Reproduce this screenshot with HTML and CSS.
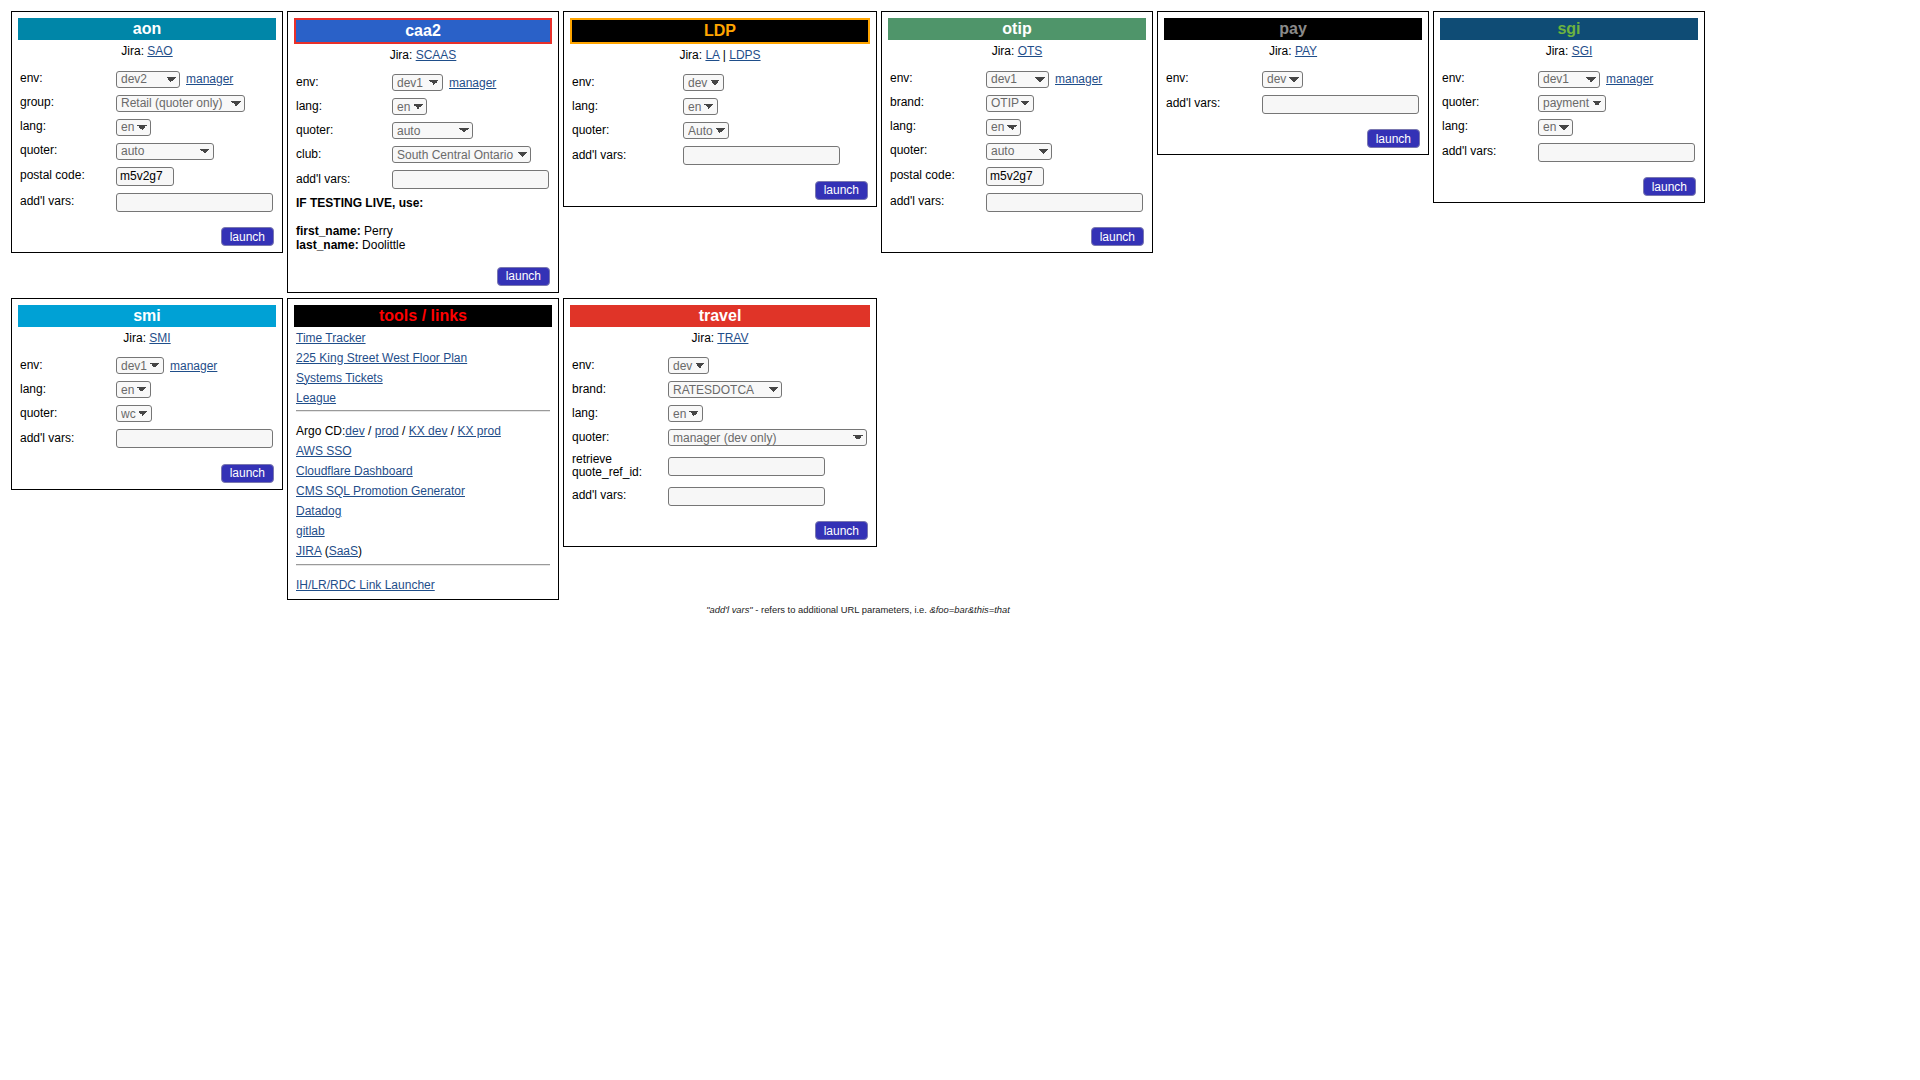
FILE: index.html
```html
<!DOCTYPE html>
<html>
<head>
<meta charset="utf-8">
<title>Launcher</title>
<link rel="stylesheet" href="styles.css">
</head>
<body>
<div class="page">
  <div class="grid">

    <!-- aon -->
    <div class="box">
      <div class="hdr aon">aon</div>
      <div class="jira">Jira: <a href="#">SAO</a></div>
      <div class="form">
        <div class="lbl">env:</div>
        <div class="val"><select class="w64"><option>dev2</option></select><a href="#">manager</a></div>
        <div class="lbl">group:</div>
        <div class="val"><select class="w129"><option>Retail (quoter only)</option></select></div>
        <div class="lbl">lang:</div>
        <div class="val"><select class="w35"><option>en</option></select></div>
        <div class="lbl">quoter:</div>
        <div class="val"><select class="w98"><option>auto</option></select></div>
        <div class="lbl">postal code:</div>
        <div class="val in"><input class="i58" type="text" value="m5v2g7"></div>
        <div class="lbl">add'l vars:</div>
        <div class="val in"><input class="i157" type="text"></div>
      </div>
      <div class="actions"><button class="launch">launch</button></div>
    </div>

    <!-- caa2 -->
    <div class="box">
      <div class="hdr caa2">caa2</div>
      <div class="jira">Jira: <a href="#">SCAAS</a></div>
      <div class="form">
        <div class="lbl">env:</div>
        <div class="val"><select class="w51"><option>dev1</option></select><a href="#">manager</a></div>
        <div class="lbl">lang:</div>
        <div class="val"><select class="w35"><option>en</option></select></div>
        <div class="lbl">quoter:</div>
        <div class="val"><select class="w81"><option>auto</option></select></div>
        <div class="lbl">club:</div>
        <div class="val"><select class="w139"><option>South Central Ontario</option></select></div>
        <div class="lbl">add'l vars:</div>
        <div class="val in"><input class="i157" type="text"></div>
      </div>
      <div class="note">
        <b>IF TESTING LIVE, use:</b><br><br>
        <b>first_name:</b> Perry<br>
        <b>last_name:</b> Doolittle
      </div>
      <div class="actions"><button class="launch">launch</button></div>
    </div>

    <!-- LDP -->
    <div class="box">
      <div class="hdr ldp">LDP</div>
      <div class="jira">Jira: <a href="#">LA</a> | <a href="#">LDPS</a></div>
      <div class="form wide">
        <div class="lbl">env:</div>
        <div class="val"><select class="w41"><option>dev</option></select></div>
        <div class="lbl">lang:</div>
        <div class="val"><select class="w35"><option>en</option></select></div>
        <div class="lbl">quoter:</div>
        <div class="val"><select class="w46"><option>Auto</option></select></div>
        <div class="lbl">add'l vars:</div>
        <div class="val in"><input class="i157" type="text"></div>
      </div>
      <div class="actions"><button class="launch">launch</button></div>
    </div>

    <!-- otip -->
    <div class="box">
      <div class="hdr otip">otip</div>
      <div class="jira">Jira: <a href="#">OTS</a></div>
      <div class="form">
        <div class="lbl">env:</div>
        <div class="val"><select class="w63"><option>dev1</option></select><a href="#">manager</a></div>
        <div class="lbl">brand:</div>
        <div class="val"><select class="w48"><option>OTIP</option></select></div>
        <div class="lbl">lang:</div>
        <div class="val"><select class="w35"><option>en</option></select></div>
        <div class="lbl">quoter:</div>
        <div class="val"><select class="w66"><option>auto</option></select></div>
        <div class="lbl">postal code:</div>
        <div class="val in"><input class="i58" type="text" value="m5v2g7"></div>
        <div class="lbl">add'l vars:</div>
        <div class="val in"><input class="i157" type="text"></div>
      </div>
      <div class="actions"><button class="launch">launch</button></div>
    </div>

    <!-- pay -->
    <div class="box">
      <div class="hdr pay">pay</div>
      <div class="jira">Jira: <a href="#">PAY</a></div>
      <div class="form">
        <div class="lbl">env:</div>
        <div class="val"><select class="w41"><option>dev</option></select></div>
        <div class="lbl">add'l vars:</div>
        <div class="val in"><input class="i157" type="text"></div>
      </div>
      <div class="actions"><button class="launch">launch</button></div>
    </div>

    <!-- sgi -->
    <div class="box">
      <div class="hdr sgi">sgi</div>
      <div class="jira">Jira: <a href="#">SGI</a></div>
      <div class="form">
        <div class="lbl">env:</div>
        <div class="val"><select class="w62"><option>dev1</option></select><a href="#">manager</a></div>
        <div class="lbl">quoter:</div>
        <div class="val"><select class="w68"><option>payment</option></select></div>
        <div class="lbl">lang:</div>
        <div class="val"><select class="w35"><option>en</option></select></div>
        <div class="lbl">add'l vars:</div>
        <div class="val in"><input class="i157" type="text"></div>
      </div>
      <div class="actions"><button class="launch">launch</button></div>
    </div>

    <!-- smi -->
    <div class="box">
      <div class="hdr smi">smi</div>
      <div class="jira">Jira: <a href="#">SMI</a></div>
      <div class="form">
        <div class="lbl">env:</div>
        <div class="val"><select class="w48"><option>dev1</option></select><a href="#">manager</a></div>
        <div class="lbl">lang:</div>
        <div class="val"><select class="w35"><option>en</option></select></div>
        <div class="lbl">quoter:</div>
        <div class="val"><select class="w36"><option>wc</option></select></div>
        <div class="lbl">add'l vars:</div>
        <div class="val in"><input class="i157" type="text"></div>
      </div>
      <div class="actions"><button class="launch">launch</button></div>
    </div>

    <!-- tools / links -->
    <div class="box tools">
      <div class="hdr toolshdr">tools / links</div>
      <div class="links">
        <div class="item"><a href="#">Time Tracker</a></div>
        <div class="item"><a href="#">225 King Street West Floor Plan</a></div>
        <div class="item"><a href="#">Systems Tickets</a></div>
        <div class="item"><a href="#">League</a></div>
        <hr class="sep">
        <div class="item">Argo CD:<a href="#">dev</a> / <a href="#">prod</a> / <a href="#">KX dev</a> / <a href="#">KX prod</a></div>
        <div class="item"><a href="#">AWS SSO</a></div>
        <div class="item"><a href="#">Cloudflare Dashboard</a></div>
        <div class="item"><a href="#">CMS SQL Promotion Generator</a></div>
        <div class="item"><a href="#">Datadog</a></div>
        <div class="item"><a href="#">gitlab</a></div>
        <div class="item"><a href="#">JIRA</a> (<a href="#">SaaS</a>)</div>
        <hr class="sep">
        <div class="item"><a href="#">IH/LR/RDC Link Launcher</a></div>
      </div>
    </div>

    <!-- travel -->
    <div class="box">
      <div class="hdr travel">travel</div>
      <div class="jira">Jira: <a href="#">TRAV</a></div>
      <div class="form">
        <div class="lbl">env:</div>
        <div class="val"><select class="w41"><option>dev</option></select></div>
        <div class="lbl">brand:</div>
        <div class="val"><select class="w114"><option>RATESDOTCA</option></select></div>
        <div class="lbl">lang:</div>
        <div class="val"><select class="w35"><option>en</option></select></div>
        <div class="lbl">quoter:</div>
        <div class="val"><select class="w199"><option>manager (dev only)</option></select></div>
        <div class="lbl">retrieve<br>quote_ref_id:</div>
        <div class="val in"><input class="i157" type="text"></div>
        <div class="lbl">add'l vars:</div>
        <div class="val in"><input class="i157" type="text"></div>
      </div>
      <div class="actions"><button class="launch">launch</button></div>
    </div>

  </div>
  <div class="footnote"><i>"add'l vars"</i> - refers to additional URL parameters, i.e. <i>&amp;foo=bar&amp;this=that</i></div>
</div>
</body>
</html>
```

FILE: styles.css
```css
body {
  margin: 8px;
  font-family: "Liberation Sans", Arial, sans-serif;
  font-size: 12px;
  color: #000;
  background: #fff;
}

a {
  color: #1f4e8a;
  text-decoration: underline;
}

.page {
  display: inline-block;
  padding: 3px;
}

.grid {
  display: grid;
  grid-template-columns: 272px 272px 314px 272px 272px 272px;
  column-gap: 4px;
  row-gap: 5px;
  align-items: start;
}

.box {
  border: 1px solid #000;
  padding: 6px;
  box-sizing: border-box;
}

.box.tools {
  padding-bottom: 4px;
}

.hdr {
  color: #fff;
  font-weight: bold;
  font-size: 16px;
  line-height: 18px;
  padding: 2px 0;
  text-align: center;
}

.aon { background: #0086a8; }
.caa2 { background: #2a61c8; border: 2px solid #e8302a; padding: 1.75px 0; }
.ldp { background: #000; color: #ffa500; border: 2px solid #ffa500; padding: 1.75px 0; }
.otip { background: #4f956a; }
.pay { background: #000; color: #8a8a8a; }
.sgi { background: #0f4c75; color: #6cb33f; }
.smi { background: #00a1d5; }
.toolshdr { background: #000; color: #ff0000; }
.travel { background: #e03428; }

.jira {
  text-align: center;
  margin-top: 4px;
  line-height: 14px;
}

.form {
  display: grid;
  grid-template-columns: 96px 1fr;
  row-gap: 2px;
  margin-top: 10px;
}

.form.wide {
  grid-template-columns: 111px 1fr;
}

.lbl {
  display: flex;
  align-items: center;
  padding: 2px;
  line-height: 13.8px;
}

.val {
  display: flex;
  align-items: center;
  gap: 6px;
  padding: 2px;
  min-height: 22px;
  box-sizing: border-box;
}

.val.in {
  min-height: 24px;
}

select {
  -webkit-appearance: none;
  appearance: none;
  font-family: "Liberation Sans", Arial, sans-serif;
  font-size: 12px;
  height: 17px;
  box-sizing: border-box;
  color: #6a6a6a;
  background-color: #f8f8f8;
  background-image: linear-gradient(45deg, transparent 50%, #454545 50%),
                    linear-gradient(135deg, #454545 50%, transparent 50%);
  background-size: 5px 5px, 5px 5px;
  background-position: right 8px center, right 3px center;
  background-repeat: no-repeat;
  border: 1px solid #767676;
  border-radius: 3px;
  padding: 0 14px 0 4px;
  margin: 0;
}

input {
  font-family: "Liberation Sans", Arial, sans-serif;
  font-size: 12px;
  height: 19px;
  box-sizing: border-box;
  background: #f7f7f7;
  border: 1px solid #767676;
  border-radius: 3px;
  padding: 1px 3px;
  margin: 0;
  color: #000;
}

.w35 { width: 35px; }
.w36 { width: 36px; }
.w41 { width: 41px; }
.w46 { width: 46px; }
.w48 { width: 48px; }
.w51 { width: 51px; }
.w62 { width: 62px; }
.w63 { width: 63px; }
.w64 { width: 64px; }
.w66 { width: 66px; }
.w68 { width: 68px; }
.w81 { width: 81px; }
.w98 { width: 98px; }
.w114 { width: 114px; }
.w129 { width: 129px; }
.w139 { width: 139px; }
.w199 { width: 199px; }

.i58 { width: 58px; }
.i157 { width: 157px; }

.note {
  margin-top: 2px;
  padding: 2px;
}

.actions {
  display: flex;
  justify-content: flex-end;
  padding: 0 2px;
  margin-top: 13px;
}

.launch {
  font-family: "Liberation Sans", Arial, sans-serif;
  font-size: 12px;
  height: 19px;
  padding: 0 8px;
  color: #fff;
  background: #3432b6;
  border: 1px solid #7a78b0;
  border-radius: 4px;
  cursor: pointer;
}

.links {
  padding: 0 2px;
  margin-top: 1px;
}

.item {
  line-height: 20px;
}

.sep {
  height: 0;
  border: 0;
  border-top: 1px solid #9a9a9a;
  border-bottom: 1px solid #e6e6e6;
  margin: 2.6px 0 9px;
}

.footnote {
  margin-top: 4px;
  font-size: 9.4px;
  text-align: center;
  color: #222;
}
```
